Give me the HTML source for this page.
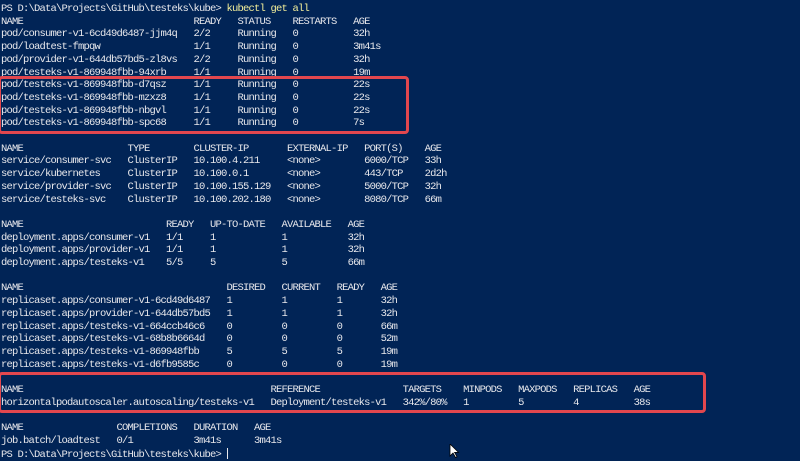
<!DOCTYPE html>
<html><head><meta charset="utf-8"><style>
html,body{margin:0;padding:0;}
body{width:800px;height:457px;background:#012456;overflow:hidden;position:relative;}
pre{position:absolute;left:1px;top:3px;margin:0;font-family:"Liberation Mono",monospace;font-size:10.5px;letter-spacing:-0.8px;line-height:12.7px;color:#e8e8ec;}
.y{color:#f2ee9a;}
.box{position:absolute;border:3px solid #e2474e;border-radius:4px;box-sizing:border-box;}
.cur{display:inline-block;width:1px;height:11px;background:#e8e8ec;vertical-align:-2px;}
</style></head><body>
<pre>PS D:\Data\Projects\GitHub\testeks\kube&gt; <span class="y">kubectl get all</span>
NAME                               READY   STATUS    RESTARTS   AGE
pod/consumer-v1-6cd49d6487-jjm4q   2/2     Running   0          32h
pod/loadtest-fmpqw                 1/1     Running   0          3m41s
pod/provider-v1-644db57bd5-zl8vs   2/2     Running   0          32h
pod/testeks-v1-869948fbb-94xrb     1/1     Running   0          19m
pod/testeks-v1-869948fbb-d7qsz     1/1     Running   0          22s
pod/testeks-v1-869948fbb-mzxz8     1/1     Running   0          22s
pod/testeks-v1-869948fbb-nbgvl     1/1     Running   0          22s
pod/testeks-v1-869948fbb-spc68     1/1     Running   0          7s

NAME                   TYPE        CLUSTER-IP       EXTERNAL-IP   PORT(S)    AGE
service/consumer-svc   ClusterIP   10.100.4.211     &lt;none&gt;        6000/TCP   33h
service/kubernetes     ClusterIP   10.100.0.1       &lt;none&gt;        443/TCP    2d2h
service/provider-svc   ClusterIP   10.100.155.129   &lt;none&gt;        5000/TCP   32h
service/testeks-svc    ClusterIP   10.100.202.180   &lt;none&gt;        8080/TCP   66m

NAME                          READY   UP-TO-DATE   AVAILABLE   AGE
deployment.apps/consumer-v1   1/1     1            1           32h
deployment.apps/provider-v1   1/1     1            1           32h
deployment.apps/testeks-v1    5/5     5            5           66m

NAME                                     DESIRED   CURRENT   READY   AGE
replicaset.apps/consumer-v1-6cd49d6487   1         1         1       32h
replicaset.apps/provider-v1-644db57bd5   1         1         1       32h
replicaset.apps/testeks-v1-664ccb46c6    0         0         0       66m
replicaset.apps/testeks-v1-68b8b6664d    0         0         0       52m
replicaset.apps/testeks-v1-869948fbb     5         5         5       19m
replicaset.apps/testeks-v1-d6fb9585c     0         0         0       19m

NAME                                             REFERENCE               TARGETS    MINPODS   MAXPODS   REPLICAS   AGE
horizontalpodautoscaler.autoscaling/testeks-v1   Deployment/testeks-v1   342%/80%   1         5         4          38s

NAME                 COMPLETIONS   DURATION   AGE
job.batch/loadtest   0/1           3m41s      3m41s
PS D:\Data\Projects\GitHub\testeks\kube&gt; <span class="cur"></span></pre>
<div class="box" style="left:-2px;top:76px;width:411px;height:58px;"></div>
<div class="box" style="left:-2px;top:372px;width:708px;height:41px;"></div>
<svg style="position:absolute;left:449px;top:444px" width="12" height="14" viewBox="0 0 12 14"><path d="M1 0 L1 12 L4 9 L6.5 13.5 L8 12.8 L5.6 8.4 L9.5 8.4 Z" fill="#fff" stroke="#000" stroke-width="0.8"/></svg>
</body></html>
